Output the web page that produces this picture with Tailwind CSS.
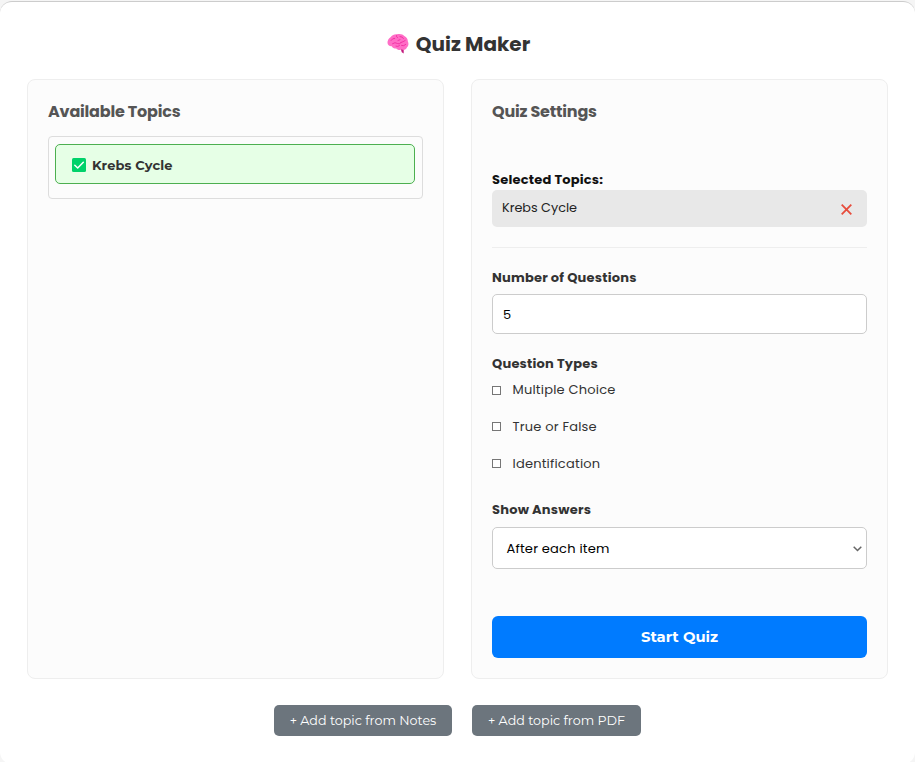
<!DOCTYPE html>
<html lang="en">
<head>
<meta charset="utf-8">
<title>Quiz Maker</title>
<script src="https://cdn.jsdelivr.net/npm/@tailwindcss/browser@4"></script>
</head>
<body class="h-[762px] overflow-hidden bg-[#f5f5f5] pt-px font-['Poppins','Inter',sans-serif] text-[13px] leading-5 text-[#333]">
<main class="flex h-[763px] flex-col rounded-[12px] border-t border-[#ccc] bg-white px-[27px]">
  <h1 class="flex h-[77px] shrink-0 items-center justify-center gap-[7px] pt-[7px] pl-[2px] text-[20px] font-bold">
    <svg class="h-[22px] w-[22px]" viewBox="0 0 22 22" fill="none">
      <path d="M14.5 15L16.7 16.5V20.5L14.8 19.2L13.7 16Z" fill="#c2187c"/>
      <path d="M.5 10C.3 7.500 1.800 5.500 3.500 4.300C5 1.900 7.600 1.100 10 1.300C12.800.3 16 1.200 17.300 3C19.500 4 21 6.200 20.800 8.300C22 10.700 21.500 13.500 20 14.300C19 16.800 16.800 17.500 14.700 16.600C12.700 17.400 10.300 17 9.300 15.500C7 15.500 5.300 14.800 4.800 13.200C2.500 13.500.7 12 .5 10Z" fill="#ff6dc6"/>
      <path d="M4 7.500Q5.500 5 7.700 5.300M9.500 2.500Q9 4 10.500 4.700M13 3.500Q15.500 3.500 16.500 5.500M5.500 10.700Q8 8.700 10.500 10.500Q13 12 14 9.500M14 9.500Q16.200 9 18.200 7.500M14.500 12.500Q17 13.500 18.700 11.500M9 13.200Q11 14 12.500 12.700M11 7.500L13 6.700" stroke="#ed249d" stroke-width=".8" stroke-linecap="round"/>
    </svg>
    <span>Quiz Maker</span>
  </h1>

  <div class="grid h-[600px] shrink-0 grid-cols-2 gap-[27px]">
    <section class="rounded-[8px] border border-[#eee] bg-[#fcfcfc] p-5">
      <h2 class="mt-px text-base leading-[22px] font-bold tracking-[-0.2px] text-[#555]">Available Topics</h2>
      <div class="mt-[13px] h-[63px] rounded-[4px] border border-[#ddd] pt-[7px] pr-[7px] pl-[6px]">
        <div class="flex h-10 items-center gap-[6px] rounded-[5px] border border-[#4caf50] bg-[#e6ffe6] px-4 pt-[2px] font-['Montserrat','Inter',sans-serif] text-[13px] font-bold">
          <svg class="h-[14px] w-[14px]" viewBox="0 0 14 14" fill="none"><rect width="14" height="14" rx="1.500" fill="#00d26a"/><path d="M2.800 7.300L5.700 10L11.300 4.300" stroke="white" stroke-width="1.500" stroke-linecap="round" stroke-linejoin="round"/></svg>
          <span class="tracking-[0.1px]">Krebs Cycle</span>
        </div>
      </div>
    </section>

    <section class="flex flex-col rounded-[8px] border border-[#eee] bg-[#fcfcfc] p-5">
      <h2 class="mt-px text-base leading-[22px] font-bold tracking-[-0.2px] text-[#555]">Quiz Settings</h2>
      <div class="mt-[47px] font-bold tracking-[0.2px] text-[#111]"><span>Selected Topics:</span></div>
      <div class="flex h-[37px] items-center justify-between rounded-[5px] bg-[#e8e8e8] pr-[15.5px] pl-[10px] text-[12.8px] text-[#222]">
        <span class="-mt-[2px]">Krebs Cycle</span>
        <svg class="mt-[2px] h-[11px] w-[11px]" viewBox="0 0 11 11"><path d="M.7.700L10.300 10.300M10.300.700L.7 10.300" stroke="#e74c3c" stroke-width="1.800"/></svg>
      </div>
      <hr class="mt-5 border-[#eee]">
      <div class="mt-5 font-bold tracking-[0.2px]"><span>Number of Questions</span></div>
      <div class="mt-[6px] flex h-10 items-center rounded-[5px] border border-[#ccc] bg-white px-[10px] pt-[2px] text-[13px] text-black"><span>5</span></div>
      <div class="mt-5 font-bold tracking-[0.2px]"><span>Question Types</span></div>
      <div class="mt-[6px] flex flex-col gap-[17px] tracking-[0.2px]">
        <label class="flex items-center gap-[11.5px]"><i class="mt-px h-[9px] w-[9px] border border-[#767676] bg-white"></i><span>Multiple Choice</span></label>
        <label class="flex items-center gap-[11.5px]"><i class="-mt-px h-[9px] w-[9px] border border-[#767676] bg-white"></i><span>True or False</span></label>
        <label class="flex items-center gap-[11.5px]"><i class="-mt-px h-[9px] w-[9px] border border-[#767676] bg-white"></i><span>Identification</span></label>
      </div>
      <div class="mt-[26px] font-bold tracking-[0.2px]"><span>Show Answers</span></div>
      <div class="mt-[7px] flex h-[42px] items-center justify-between rounded-[5px] border border-[#ccc] bg-white pr-[4px] pl-[13.5px] tracking-[0.2px] text-black">
        <span class="mt-[2px]">After each item</span>
        <svg class="mt-px h-[6px] w-[9px]" viewBox="0 0 9 6" fill="none"><path d="M.7.700L4.500 4.500L8.300.7" stroke="#666" stroke-width="1.500"/></svg>
      </div>
      <button class="mt-[47px] h-[42px] rounded-[6px] bg-[#007bff] font-['Montserrat','Inter',sans-serif] text-[14.8px] font-bold text-white"><span>Start Quiz</span></button>
    </section>
  </div>

  <div class="mt-[26px] flex justify-center gap-5 font-['Montserrat','Inter',sans-serif] text-[12.7px] text-white">
    <button class="h-[31px] w-[178px] rounded-[5px] bg-[#6c757d] pt-px"><span>+ Add topic from Notes</span></button>
    <button class="h-[31px] w-[169px] rounded-[5px] bg-[#6c757d] pt-px"><span>+ Add topic from PDF</span></button>
  </div>
</main>
</body>
</html>
